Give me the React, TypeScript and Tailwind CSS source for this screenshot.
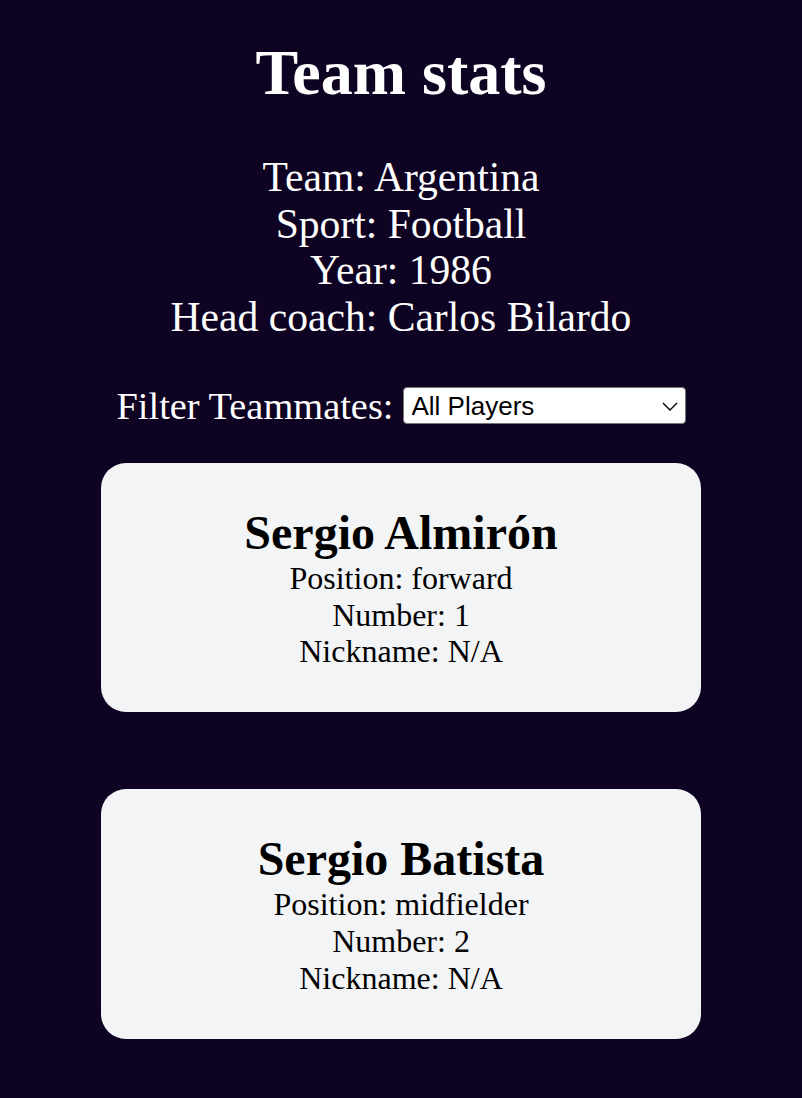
const players = [
  { name: 'Sergio Almirón', position: 'forward', number: 1, nickname: 'N/A' },
  { name: 'Sergio Batista', position: 'midfielder', number: 2, nickname: 'N/A' },
];

function PlayerCard({ name, position, number, nickname }: (typeof players)[number]) {
  return (
    <div className="w-[600px] rounded-[25px] bg-[#f3f4f6] py-[42px] text-center text-black">
      <h2 className="text-[48px] font-bold leading-[55px]">{name}</h2>
      <p className="text-[32px] leading-[36.8px]">Position: {position}</p>
      <p className="text-[32px] leading-[36.8px]">Number: {number}</p>
      <p className="text-[32px] leading-[36.8px]">Nickname: {nickname}</p>
    </div>
  );
}

export default function App() {
  return (
    <div className="min-h-[1098px] bg-[#0e0322] font-['Liberation_Serif',serif] text-white flex flex-col items-center pt-[36px] pb-10">
      <h1 className="text-[64px] font-bold leading-[74px]">Team stats</h1>
      <div className="mt-[44px] text-center text-[41.6px] leading-[46.7px]">
        <p>Team: Argentina</p>
        <p>Sport: Football</p>
        <p>Year: 1986</p>
        <p>Head coach: Carlos Bilardo</p>
      </div>
      <div className="mt-[42px] flex items-center gap-[9px] text-[38.4px] leading-[46px]">
        <label htmlFor="filter">Filter Teammates:</label>
        <div className="relative">
          <select
            id="filter"
            className="block h-[37px] w-[283px] appearance-none rounded-[4px] border border-[#767676] bg-white pl-[8px] pt-[1px] font-['Liberation_Sans',sans-serif] text-[26px] leading-[34px] text-black"
            defaultValue="all"
          >
            <option value="all">All Players</option>
          </select>
          <svg
            className="pointer-events-none absolute right-[8px] top-[15px] h-[9px] w-[16px]"
            viewBox="0 0 16 9"
            fill="none"
            stroke="#000"
            strokeWidth="1.4"
          >
            <path d="M1 1 L8 8 L15 1" />
          </svg>
        </div>
      </div>
      <div className="mt-[34px] flex flex-col gap-[77px]">
        {players.map((p) => (
          <PlayerCard key={p.name} {...p} />
        ))}
      </div>
    </div>
  );
}
